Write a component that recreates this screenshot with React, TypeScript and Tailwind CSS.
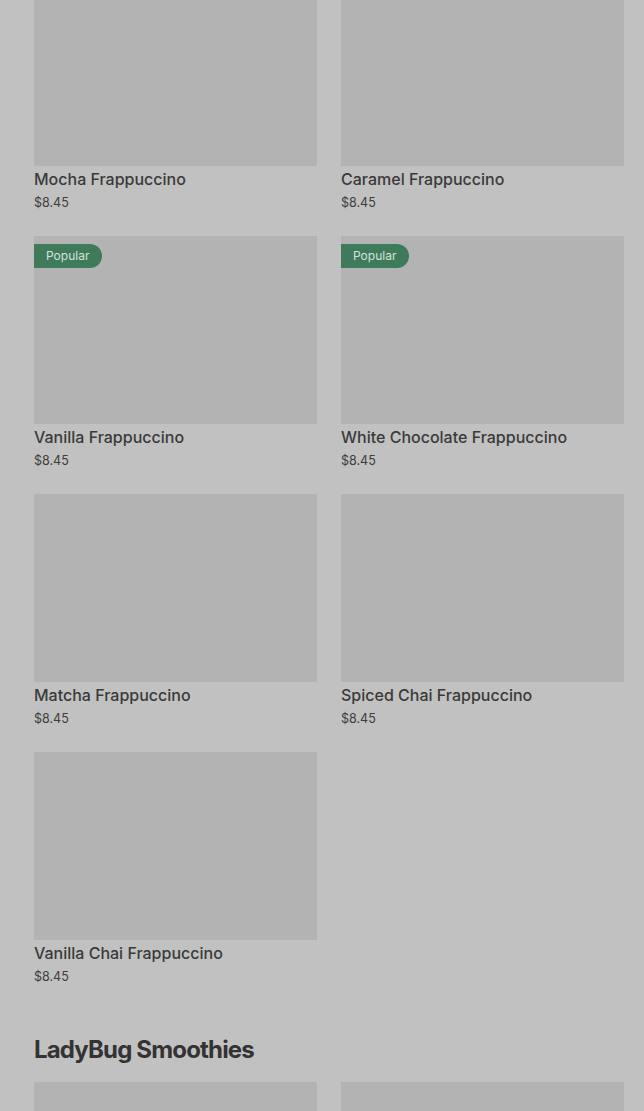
const items = [
  { name: 'Mocha Frappuccino', price: '$8.45' },
  { name: 'Caramel Frappuccino', price: '$8.45' },
  { name: 'Vanilla Frappuccino', price: '$8.45', popular: true },
  { name: 'White Chocolate Frappuccino', price: '$8.45', popular: true },
  { name: 'Matcha Frappuccino', price: '$8.45' },
  { name: 'Spiced Chai Frappuccino', price: '$8.45' },
  { name: 'Vanilla Chai Frappuccino', price: '$8.45' },
];

function ItemCard({ name, price, popular }: { name: string; price: string; popular?: boolean }) {
  return (
    <div className="flex flex-col">
      <div className="relative h-[188px] bg-[#b3b3b3]">
        {popular && (
          <span className="absolute left-0 top-[8px] flex h-[24px] items-center rounded-r-full bg-[#3f7b5b] pl-[12px] pr-[13px] text-[12px] text-[#d6e2dc]">
            Popular
          </span>
        )}
      </div>
      <p className="mt-[1px] text-[16px] leading-[24px] font-medium text-[#3a3a3a]">{name}</p>
      <p className="mt-[2px] text-[12.5px] leading-[20px] text-[#3d3d3d]">{price}</p>
    </div>
  );
}

export default function App() {
  return (
    <div
      className="h-[1111px] overflow-hidden bg-[#c1c1c1] pl-[34px] pr-[20px]"
      style={{ fontFamily: 'Inter, "Noto Sans", sans-serif' }}
    >
      <div className="-mt-[22px] grid grid-cols-2 gap-x-[24px] gap-y-[23px]">
        {items.map((item) => (
          <ItemCard key={item.name} {...item} />
        ))}
      </div>

      <h2 className="mt-[47px] text-[24px] leading-[32px] font-bold tracking-[-0.035em] text-[#333333]">
        LadyBug Smoothies
      </h2>

      <div className="mt-[16px] grid grid-cols-2 gap-x-[24px]">
        <div className="h-[188px] bg-[#b3b3b3]" />
        <div className="h-[188px] bg-[#b3b3b3]" />
      </div>
    </div>
  );
}
